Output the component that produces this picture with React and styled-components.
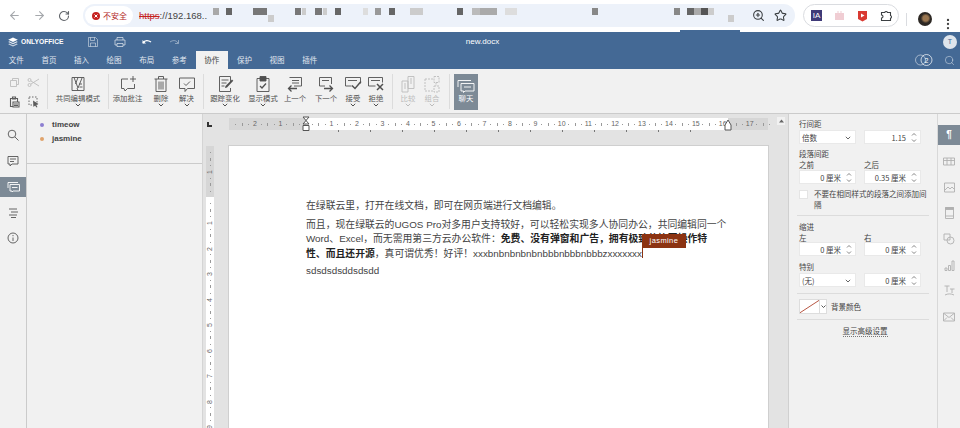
import React from 'react';
import styled, { createGlobalStyle } from 'styled-components';
import { ArrowLeft, ArrowRight, RotateCw, ZoomIn, Star, EllipsisVertical, Search } from 'lucide-react';

const GlobalStyle = createGlobalStyle`
  html, body { margin: 0; padding: 0; background: #fff; }
  body { font-family: "Noto Sans CJK SC", "Liberation Sans", sans-serif; }
  * { box-sizing: border-box; }
`;

const ink = '#505050';
const pale = '#bcbcbc';

// x, width, colour, sits lower
const urlBlocks = [
  [213, 6, '#a9a9a9'], [226, 6, '#666'], [253, 14, '#777'], [268, 6, '#ccc', 1], [295, 6, '#777'],
  [302, 4, '#ccc'], [315, 7, '#777'], [323, 4, '#ccc'], [335, 6, '#666'], [363, 5, '#ddd'],
  [375, 6, '#999'], [389, 6, '#666'], [410, 13, '#ccc'], [457, 6, '#666'], [472, 8, '#bbb'],
  [480, 17, '#aaa'], [505, 12, '#ddd'], [592, 6, '#888'], [674, 6, '#888'], [687, 7, '#666'],
  [694, 7, '#aaa'], [701, 7, '#555'], [708, 6, '#ccc'], [728, 6, '#ccc', 1],
];

const menuTabs = ['文件', '首页', '插入', '绘图', '布局', '参考', '协作', '保护', '视图', '插件'];

const Page = styled.div`
  width: 960px;
  height: 428px;
  overflow: hidden;
  display: flex;
  flex-direction: column;
  color: #444;
`;

/* browser chrome */
const BrowserBar = styled.div`
  height: 32px;
  flex: none;
  display: flex;
  padding: 4px 0 0 7px;
  background: #fff;
  position: relative;
`;
const NavButton = styled.div`
  width: 14px;
  height: 23px;
  margin-right: 11px;
  display: flex;
  align-items: center;
  justify-content: center;
  color: ${p => (p.$off ? '#a5a8ac' : '#5f6368')};
`;
const Omnibox = styled.div`
  width: 712px;
  height: 23px;
  margin-left: 1px;
  border-radius: 12px;
  background: #edf2fa;
  display: flex;
  align-items: center;
  padding: 0 8px 0 2px;
  overflow: hidden;
`;
const Insecure = styled.div`
  width: 48px;
  height: 19px;
  flex: none;
  border-radius: 10px;
  background: #fff;
  display: flex;
  align-items: center;
  gap: 3px;
  padding-left: 7px;
  font-size: 8px;
  color: #b3261e;
`;
const Url = styled.div`
  margin-left: 6px;
  width: 74px;
  flex: none;
  font: 9.5px/12px "Liberation Sans", sans-serif;
  color: #444;
  white-space: nowrap;
  s { color: #c5221f; }
`;
const Blocks = styled.div`
  flex: 1;
  display: flex;
  height: 8px;
  margin-top: -7px;
`;
const Block = styled.span`
  flex: none;
  height: 7px;
  width: ${p => p.$w}px;
  margin-left: ${p => p.$gap}px;
  background: ${p => p.$c};
  transform: translateY(${p => (p.$low ? 7 : 0)}px);
`;
const OmniIcons = styled.div`
  display: flex;
  gap: 9px;
  color: #3c4043;
`;
const ExtPill = styled.div`
  width: 96px;
  height: 23px;
  margin-left: 8px;
  border: 1px solid #dadce0;
  border-radius: 12px;
  display: flex;
  align-items: center;
  justify-content: space-between;
  padding: 0 5px 0 7px;
`;
const ExtBadge = styled.div`
  width: 11px;
  height: 11px;
  background: #3f3a78;
  color: #fff;
  font: 8px/11px "Liberation Sans", sans-serif;
  text-align: center;
`;
const BarDivider = styled.div`
  width: 1px;
  height: 13px;
  margin: 9px 0 0 7px;
  background: #dadce0;
`;
const Profile = styled.div`
  width: 14px;
  height: 14px;
  margin: 8px 0 0 11px;
  border-radius: 50%;
  background: radial-gradient(circle at 55% 45%, #9a7650 0 25%, #2c2723 45%);
`;
const Kebab = styled.div`
  margin: 8px 0 0 9px;
  color: #444;
`;
const Notch = styled.div`
  position: absolute;
  left: 680px;
  bottom: 0;
  width: 60px;
  height: 2px;
  background: #446995;
`;

/* blue app header */
const Header = styled.div`
  height: 37px;
  flex: none;
  background: #446995;
  color: #fff;
`;
const TitleRow = styled.div`
  height: 19px;
  display: grid;
  grid-template-columns: 1fr auto 1fr;
  align-items: center;
  padding: 0 3px 0 8px;
`;
const Brand = styled.div`
  display: flex;
  align-items: center;
  gap: 3px;
  font: bold 6.7px/10px "Liberation Sans", sans-serif;
`;
const QuickTools = styled.div`
  display: flex;
  gap: 15px;
  margin-left: 21px;
`;
const DocName = styled.div`
  font: 8px/10px "Liberation Sans", sans-serif;
`;
const Avatar = styled.div`
  justify-self: end;
  width: 14px;
  height: 14px;
  border-radius: 50%;
  background: #dfe5ec;
  color: #446995;
  font: 7px/14px "Liberation Sans", sans-serif;
  text-align: center;
`;
const TabRow = styled.div`
  height: 18px;
  display: flex;
  align-items: stretch;
`;
const Tab = styled.div`
  width: 32.6px;
  font-size: 7.5px;
  line-height: 17px;
  text-align: center;
  color: ${p => (p.$active ? '#444' : '#e0e7ef')};
  background: ${p => (p.$active ? '#f1f1f1' : 'transparent')};
`;
const TabTools = styled.div`
  margin-left: auto;
  display: flex;
  align-items: center;
  gap: 11px;
  padding-right: 5px;
`;

/* ribbon */
const Ribbon = styled.div`
  height: 45px;
  flex: none;
  background: #f1f1f1;
  border-bottom: 1px solid #cbcbcb;
  display: flex;
  align-items: flex-start;
`;
const ClipGrid = styled.div`
  width: 47px;
  display: grid;
  grid-template-columns: 19px 19px;
  grid-auto-rows: 20px;
  padding: 3px 0 0 5px;
  align-items: center;
  justify-items: center;
`;
const ClipCell = styled.span`
  display: flex;
  color: ${p => (p.$off ? pale : '#5c5c5c')};
`;
const Sep = styled.div`
  width: 1px;
  height: 35px;
  margin-top: 5px;
  background: #dcdcdc;
`;
const Group = styled.div`
  display: flex;
  width: ${p => p.$w}px;
`;
const ToolItem = styled.div`
  width: ${p => p.$w}px;
  height: 40px;
  padding-top: 6px;
  display: flex;
  flex-direction: column;
  align-items: center;
  color: ${p => (p.$off ? pale : ink)};
`;
const ToolLabel = styled.div`
  font-size: 7.4px;
  line-height: 9px;
  white-space: nowrap;
`;
const Chevron = styled.svg`
  width: 6px;
  height: 4px;
  margin-top: 1px;
`;
const ChatButton = styled.div`
  width: 24px;
  height: 36px;
  margin: 5px 0 0 4px;
  background: #7d8a96;
  color: #fff;
  display: flex;
  flex-direction: column;
  align-items: center;
  padding-top: 5px;
`;

/* work area */
const Work = styled.div`
  flex: 1;
  min-height: 0;
  display: flex;
`;
const LeftRail = styled.div`
  width: 27px;
  flex: none;
  background: #f1f1f1;
  border-right: 1px solid #cbcbcb;
  padding-top: 11px;
  display: flex;
  flex-direction: column;
  color: #555;
`;
const RailButton = styled.div`
  height: 20px;
  margin-bottom: ${p => p.$mb ?? 6}px;
  display: flex;
  align-items: center;
  justify-content: center;
  background: ${p => (p.$active ? '#7d8a96' : 'transparent')};
  color: ${p => (p.$active ? '#fff' : '#555')};
`;
const UserPanel = styled.div`
  width: 176px;
  flex: none;
  background: #f1f1f1;
  border-right: 1px solid #d4d4d4;
`;
const UserList = styled.div`
  height: 50px;
  border-bottom: 1px solid #cbcbcb;
  padding: 4px 0 0 13px;
`;
const UserRow = styled.div`
  height: 14px;
  display: flex;
  align-items: center;
  gap: 8px;
  font: bold 8px/14px "Liberation Sans", sans-serif;
  color: #444;
`;
const UserDot = styled.span`
  width: 4px;
  height: 4px;
  border-radius: 50%;
  background: ${p => p.$c};
`;

/* editor */
const Editor = styled.div`
  width: 585px;
  flex: none;
  display: flex;
  background: #e3e3e3;
`;
const EditorMain = styled.div`
  width: 574px;
  display: flex;
  flex-direction: column;
`;
const RulerRow = styled.div`
  height: 32px;
  flex: none;
  display: flex;
  padding-top: 4px;
`;
const TabStop = styled.div`
  width: 26px;
  padding: 4px 0 0 4px;
`;
const StopMark = styled.div`
  width: 5px;
  height: 5px;
  border-left: 2px solid #333;
  border-bottom: 2px solid #333;
`;
const HRuler = styled.div`
  width: 539px;
  height: 12px;
  position: relative;
  display: flex;
  padding-left: 3.7px;
  background: linear-gradient(to right, #d6d6d6 77px, #fff 77px, #fff 499px, #d6d6d6 499px);
`;
const HCell = styled.div`
  flex: 0 0 6.375px;
  height: 12px;
  display: flex;
  align-items: center;
  justify-content: center;
  font: 7px/12px "Liberation Sans", sans-serif;
  color: #666;
`;
const Tick = styled.span`
  flex: none;
  background: #999;
  width: 1px;
  height: ${p => (p.$big ? 3 : 1)}px;
`;
const TabTicks = styled.div`
  position: absolute;
  left: 109px;
  top: 12px;
  display: flex;
  gap: 31px;
`;
const TabTick = styled.span`
  width: 1px;
  height: 2px;
  background: #777;
`;
const IndentMarker = styled.svg`
  position: absolute;
  top: -2px;
  left: ${p => p.$x}px;
  width: 8px;
  height: 16px;
`;
const BodyRow = styled.div`
  flex: 1;
  min-height: 0;
  display: flex;
`;
const VRulerSlot = styled.div`
  width: 26px;
  flex: none;
  padding-left: 3px;
`;
const VRuler = styled.div`
  width: 8px;
  height: 282px;
  display: flex;
  flex-direction: column;
  padding-top: 3.7px;
  background: linear-gradient(to bottom, #d6d6d6 51px, #fff 51px);
`;
const VCell = styled.div`
  flex: 0 0 6.375px;
  display: flex;
  align-items: center;
  justify-content: center;
  font: 7px/6px "Liberation Sans", sans-serif;
  color: #666;
`;
const VNumber = styled.span`
  transform: rotate(-90deg);
`;
const Sheet = styled.div`
  width: 539px;
  height: 300px;
  flex: none;
  background: #fff;
  box-shadow: 0 0 0 1px #cfcfcf;
  padding: 53px 0 0 77px;
  font-size: 9.83px;
  color: #444;
`;
const Para = styled.div`
  margin-bottom: ${p => p.$mb}px;
`;
const DocLine = styled.div`
  height: 14.5px;
  line-height: 14px;
  white-space: nowrap;
  font-family: "Liberation Sans", "Noto Sans CJK SC", sans-serif;
  b { font-weight: 700; color: #222; }
`;
const Cursor = styled.span`
  display: inline-block;
  position: relative;
  width: 0;
  height: 12px;
  vertical-align: middle;
`;
const CaretBar = styled.span`
  position: absolute;
  left: 0;
  bottom: 2px;
  width: 1px;
  height: 24px;
  background: #8c3312;
`;
const NameTag = styled.span`
  position: absolute;
  left: 0;
  bottom: 12px;
  width: 44px;
  height: 14px;
  background: #8c3312;
  color: #fff;
  font: 7.5px/14px "Liberation Sans", sans-serif;
  letter-spacing: 0.4px;
  text-align: center;
`;
const ScrollCol = styled.div`
  width: 11px;
  flex: none;
  padding-top: 3px;
`;
const ScrollUp = styled.div`
  width: 8px;
  height: 8px;
  background: #f1f1f1;
  display: flex;
  align-items: center;
  justify-content: center;
`;

/* paragraph settings */
const Settings = styled.div`
  width: 149px;
  flex: none;
  background: #f1f1f1;
  border-left: 1px solid #d0d0d0;
  padding: 4px 0 0 10px;
  font-size: 7.5px;
  color: #444;
`;
const FieldLabel = styled.div`
  height: ${p => p.$h ?? 12}px;
  line-height: ${p => p.$h ?? 12}px;
  margin-top: ${p => p.$mt ?? 0}px;
`;
const Two = styled.div`
  display: grid;
  grid-template-columns: 57px 57px;
  column-gap: 8px;
`;
const Field = styled.div`
  height: 14px;
  background: #fff;
  display: flex;
  align-items: center;
  justify-content: ${p => (p.$select ? 'space-between' : 'flex-end')};
  padding: ${p => (p.$select ? '0 4px 0 2px' : '0 3px 0 0')};
  gap: 5px;
  border: 1px solid #e9e9e9;
`;
const FieldCaret = styled.span`
  display: flex;
  color: #666;
`;
const Stepper = styled.svg`
  width: 6px;
  height: 11px;
  flex: none;
`;
const CheckRow = styled.div`
  display: flex;
  gap: 6px;
  margin-top: 4px;
`;
const CheckBox = styled.div`
  width: 9px;
  height: 9px;
  margin-top: 2px;
  flex: none;
  background: #fff;
  border: 1px solid #e4e4e4;
`;
const CheckText = styled.div`
  width: 115px;
  line-height: 11px;
`;
const Rule = styled.div`
  width: 132px;
  height: 1px;
  background: #dcdcdc;
  margin: ${p => p.$m};
`;
const ColorRow = styled.div`
  display: flex;
  align-items: center;
  gap: 4px;
  margin-top: 5px;
  height: 15px;
`;
const ColorSwatch = styled.div`
  width: 28px;
  height: 15px;
  background: #fff;
  border: 1px solid #ddd;
  display: flex;
`;
const ColorArrow = styled.div`
  width: 7px;
  margin-left: auto;
  border-left: 1px solid #ddd;
  display: flex;
  align-items: center;
  justify-content: center;
`;
const AdvancedLink = styled.div`
  width: 132px;
  margin-top: 5px;
  text-align: center;
  line-height: 11px;
  span { border-bottom: 1px dotted #777; }
`;
const RightRail = styled.div`
  width: 23px;
  flex: none;
  background: #f1f1f1;
  border-left: 1px solid #d8d8d8;
  padding-top: 11px;
  display: flex;
  flex-direction: column;
`;
const RightTab = styled.div`
  height: ${p => p.$h ?? 26}px;
  margin-bottom: ${p => (p.$active ? 3 : 0)}px;
  display: flex;
  align-items: center;
  justify-content: center;
  background: ${p => (p.$active ? '#7d8a96' : 'transparent')};
  color: ${p => (p.$active ? '#fff' : '#b0b0b0')};
  font: bold 10px/20px "Liberation Sans", sans-serif;
`;

const Svg = ({ w = 18, h = 18, children, sw = 0.9 }) => (
  <svg width={w} height={h} viewBox={`0 0 ${w} ${h}`} fill="none" stroke="currentColor" strokeWidth={sw}>{children}</svg>
);

const ChevronDown = () => (
  <Chevron viewBox="0 0 6 4" fill="none" stroke="currentColor"><path d="M.8.8 3 3l2.2-2.2" /></Chevron>
);

const icons = {
  copy: <Svg w={11} h={11}><path d="M1.5 3.5h6v6h-6zM3.5 3V1.5h6v6H8" /></Svg>,
  cut: <Svg w={13} h={11}><circle cx="2.5" cy="3" r="1.5" /><circle cx="2.5" cy="8" r="1.5" /><path d="M4 4 12 9M4 7l8-5" /></Svg>,
  paste: <Svg w={11} h={12} sw={1.1}><path d="M1.5 2.5h7v8h-7zM3.5 1h3v2h-3z" /><path d="M4 6h6v5H4z" fill="#f1f1f1" /><path d="M5 8h4M5 9.500h4" /></Svg>,
  select: <Svg w={12} h={12}><path d="M1 1h8v8H1z" strokeDasharray="1.5 1.5" /><path d="M5 4.5 10.5 8 8 8.700 9.500 11 8.500 11.500 7 9.500 5.500 11z" fill="currentColor" stroke="none" /></Svg>,
  mode: <Svg><path d="M3 2.500h12v13H3zM5 2.500 9 13M9 2.500 6.500 9M8 13l1 2.500M13 3 9 13" /><path d="M10 9h3M10.500 12h3" /></Svg>,
  addComment: <Svg><path d="M9 4H2.500v9.500H5l1 2.500 2.500-2.500h7V9" /><path d="M14 1v6M11 4h6" /></Svg>,
  trash: <Svg><path d="M2.500 4h13M6.500 4V1.500h5V4M4 4v12.500h10V4M7 6.500v8M9 6.500v8M11 6.500v8" /></Svg>,
  resolve: <Svg><path d="M1.500 3h15v10.500h-7l-2.500 3v-3H1.500z" /><path d="m6 8.500 2 2 4-4" /></Svg>,
  track: <Svg><path d="M14.500 7V1.500h-11v15h11V13" /><path d="M5.500 5h7M5.500 8h5M5.500 11h3" /><path d="m9 13 .5-2L16 4.500l1.300 1.300-6.300 6.700z" fill="currentColor" stroke="none" /></Svg>,
  display: <Svg><path d="M3 3.500h3M12 3.500h3v13H3v-13" /><path d="M6 1.500h6V6H6z" fill="currentColor" /><path d="m6 11 2 2 4-4.500" strokeWidth="1.300" /></Svg>,
  prev: <Svg><path d="M3.500 2.500h12V11H8M6 5.500h7M6 8h7" /><path d="M11 13.500H2.500M5.500 10.500l-3 3 3 3" strokeWidth="1.300" /></Svg>,
  next: <Svg><path d="M14.500 9V2.500h-12V11H8M5 5.500h7" /><path d="M7 13.500h8.500M12.500 10.500l3 3-3 3" strokeWidth="1.300" /></Svg>,
  accept: <Svg><path d="M1.500 2.500h15v6M1.500 2.500V11h6M4 5.500h9" /><path d="m8 10.500 3 3 6-7" strokeWidth="1.500" /></Svg>,
  reject: <Svg><path d="M1.500 2.500h14v5M1.500 2.500V11h7M4 5.500h9" /><path d="m10 9 6 6M16 9l-6 6" strokeWidth="1.500" /></Svg>,
  compare: <Svg><path d="M9 1.500h6v12H9zM3 6h6v11H3zM5 9h2M5 11h2M5 13h2M11 4h2M11 6h2M11 8h2" /></Svg>,
  combine: <Svg><path d="M2 4h6M2 4v12h6M11 1.500h5v6h-5zM11 11h5v6h-5zM8 4l3 0M8 16h3M13 7.500V11" strokeDasharray="2 1" /></Svg>,
  chat: <Svg w={18} h={14}><path d="M1 8V1.500h13" /><path d="M4 4.500h13V12H8l-1.500 1.500V12H4zM7 8h7" /></Svg>,
};

const Logo = () => (
  <svg width="10" height="10" viewBox="0 0 10 10" fill="#fff">
    <path d="M5 .5 9.800 2.700 5 5 .2 2.700z" />
    <path d="M1.300 4.300 5 6 8.700 4.300 9.800 5 5 7.300.2 5z" opacity=".85" />
    <path d="M1.300 6.500 5 8.200l3.700-1.700L9.800 7.200 5 9.500.2 7.200z" opacity=".7" />
  </svg>
);

const ToolButton = ({ w, icon, off, caret, children }) => (
  <ToolItem $w={w} $off={off}>
    {icons[icon]}
    <ToolLabel>{children}</ToolLabel>
    {caret && <ChevronDown />}
  </ToolItem>
);

const Spin = () => (
  <Stepper viewBox="0 0 6 11" fill="none" stroke="#666" strokeWidth=".8">
    <path d="M1 3.500 3 1.500l2 2M1 7.500l2 2 2-2" />
  </Stepper>
);

const Select = ({ children }) => (
  <Field $select>{children}<FieldCaret><ChevronDown /></FieldCaret></Field>
);

const Spinner = ({ children }) => <Field>{children}<Spin /></Field>;

const rulerCell = i => {
  if (i % 4 === 0) return i === 0 ? null : Math.abs(i / 4);
  return i % 2 === 0 ? <Tick $big /> : <Tick />;
};

const hCells = Array.from({ length: 83 }, (_, n) => n - 11);
const vCells = Array.from({ length: 44 }, (_, n) => n - 7);
const tabTicks = Array.from({ length: 12 }, (_, n) => n);

const DocEditor = () => (
  <Editor>
    <EditorMain>
      <RulerRow>
        <TabStop><StopMark /></TabStop>
        <HRuler>
          {hCells.map(i => <HCell key={i}>{rulerCell(i)}</HCell>)}
          <TabTicks>{tabTicks.map(n => <TabTick key={n} />)}</TabTicks>
          <IndentMarker $x={73} viewBox="0 0 8 16" fill="#fff" stroke="#555">
            <path d="M1 1h6L1 8h6L1 1M1 9.500h6v5H1z" />
          </IndentMarker>
          <IndentMarker $x={495} viewBox="0 0 8 16" fill="#fff" stroke="#555">
            <path d="M4 4 7 9v5H1V9z" />
          </IndentMarker>
        </HRuler>
      </RulerRow>
      <BodyRow>
        <VRulerSlot>
          <VRuler>
            {vCells.map(i => {
              const c = rulerCell(i);
              return <VCell key={i}>{typeof c === 'number' ? <VNumber>{c}</VNumber> : c}</VCell>;
            })}
          </VRuler>
        </VRulerSlot>
        <Sheet>
          <Para $mb={4}>
            <DocLine>在绿联云里，打开在线文档，即可在网页端进行文档编辑。</DocLine>
          </Para>
          <Para $mb={3}>
            <DocLine>而且，现在绿联云的UGOS Pro对多用户支持较好，可以轻松实现多人协同办公，共同编辑同一个</DocLine>
            <DocLine>Word、Excel，而无需用第三方云办公软件：<b>免费、没有弹窗和广告，拥有极致的协同操作特</b></DocLine>
            <DocLine>
              <b>性、而且还开源</b>，真可谓优秀！好评！xxxbnbnbnbnbnbbbnbbbnbbbzxxxxxxx
              <Cursor><CaretBar /><NameTag>jasmine</NameTag></Cursor>
            </DocLine>
          </Para>
          <DocLine>sdsdsdsddsdsdd</DocLine>
        </Sheet>
      </BodyRow>
    </EditorMain>
    <ScrollCol>
      <ScrollUp>
        <svg width="5" height="4" viewBox="0 0 5 4" fill="#666"><path d="M2.500.5 5 3.500H0z" /></svg>
      </ScrollUp>
    </ScrollCol>
  </Editor>
);

const SettingsPanel = () => (
  <Settings>
    <FieldLabel>行间距</FieldLabel>
    <Two>
      <Select>倍数</Select>
      <Spinner>1.15</Spinner>
    </Two>
    <FieldLabel $mt={4}>段落间距</FieldLabel>
    <Two>
      <FieldLabel $h={10}>之前</FieldLabel>
      <FieldLabel $h={10}>之后</FieldLabel>
      <Spinner>0 厘米</Spinner>
      <Spinner>0.35 厘米</Spinner>
    </Two>
    <CheckRow>
      <CheckBox />
      <CheckText>不要在相同样式的段落之间添加间隔</CheckText>
    </CheckRow>
    <Rule $m="5px 0 5px -2px" />
    <FieldLabel>缩进</FieldLabel>
    <Two>
      <FieldLabel $h={9}>左</FieldLabel>
      <FieldLabel $h={9}>右</FieldLabel>
      <Spinner>0 厘米</Spinner>
      <Spinner>0 厘米</Spinner>
    </Two>
    <FieldLabel $mt={5}>特别</FieldLabel>
    <Two>
      <Select>(无)</Select>
      <Spinner>0 厘米</Spinner>
    </Two>
    <Rule $m="6px 0 0 -2px" />
    <ColorRow>
      <ColorSwatch>
        <svg width="20" height="13" viewBox="0 0 20 13"><path d="M0 13 20 0" stroke="#b5503c" /></svg>
        <ColorArrow>
          <svg width="5" height="3" viewBox="0 0 5 3" fill="none" stroke="#555"><path d="M.5.5 2.500 2.500 4.500.5" /></svg>
        </ColorArrow>
      </ColorSwatch>
      背景颜色
    </ColorRow>
    <Rule $m="5px 0 0 -2px" />
    <AdvancedLink><span>显示高级设置</span></AdvancedLink>
  </Settings>
);

const App = () => (
  <Page>
    <GlobalStyle />
    <BrowserBar>
      <NavButton $off><ArrowLeft size={13} /></NavButton>
      <NavButton $off><ArrowRight size={13} /></NavButton>
      <NavButton><RotateCw size={12} strokeWidth={2.2} /></NavButton>
      <Omnibox>
        <Insecure>
          <svg width="8" height="8" viewBox="0 0 8 8">
            <circle cx="4" cy="4" r="4" fill="#c5221f" />
            <path d="m2.500 2.500 3 3m0-3-3 3" stroke="#fff" />
          </svg>
          不安全
        </Insecure>
        <Url><s>https</s>://192.168..</Url>
        <Blocks>
          {urlBlocks.map(([x, w, c, low], n) => {
            const prev = n ? urlBlocks[n - 1][0] + urlBlocks[n - 1][1] : 213;
            return <Block key={x} $w={w} $c={c} $low={low} $gap={x - prev} />;
          })}
        </Blocks>
        <OmniIcons>
          <ZoomIn size={13} />
          <Star size={13} />
        </OmniIcons>
      </Omnibox>
      <ExtPill>
        <ExtBadge>IA</ExtBadge>
        <svg width="11" height="11" viewBox="0 0 11 11" fill="#f0cdd3"><path d="M1 3h9v7H1zM3.500 1h1v2h-1zM6.500 1h1v2h-1z" /></svg>
        <svg width="11" height="12" viewBox="0 0 11 12"><path d="M1 1h9v8l-4.500 2.500L1 9z" fill="#d93a32" /><path d="M4 3.500 7.500 5.500 4 7.500z" fill="#fff" /></svg>
        <svg width="13" height="13" viewBox="0 0 13 13" fill="none" stroke="#3c4043" strokeWidth="1.100">
          <path d="M1.500 3.500h3.200a1.500 1.500 0 0 1 2.800 0h3v3a1.500 1.500 0 0 1 0 2.800v2.200h-9V9a1.500 1.500 0 0 0 0-3z" />
        </svg>
      </ExtPill>
      <BarDivider />
      <Profile />
      <Kebab><EllipsisVertical size={14} /></Kebab>
      <Notch />
    </BrowserBar>

    <Header>
      <TitleRow>
        <Brand>
          <Logo />
          ONLYOFFICE
          <QuickTools>
            <Svg w={12} h={12} sw={0.8}><path d="M1.500 1.500h7l2 2v7h-9zM3.500 1.500v3h4v-3M3.500 10.500V7h5v3.500" opacity=".6" /></Svg>
            <Svg w={12} h={12} sw={0.8}><path d="M3 4V1.500h6V4M1 4h10v5H9M3 9H1V4M3 7.500h6v3H3z" opacity=".75" /></Svg>
            <Svg w={12} h={12} sw={1.4}><path d="M2 7c2-3 5-3 8-1" /><path d="M1.500 4v3.500H5" fill="currentColor" stroke="none" /></Svg>
            <Svg w={12} h={12} sw={1}><path d="M10 7C8 4 5 4 2 6M10.500 4v3.500H7" opacity=".4" /></Svg>
          </QuickTools>
        </Brand>
        <DocName>new.docx</DocName>
        <Avatar>T</Avatar>
      </TitleRow>
      <TabRow>
        {menuTabs.map(t => <Tab key={t} $active={t === '协作'}>{t}</Tab>)}
        <TabTools>
          <Svg w={19} h={14} sw={0.7}>
            <circle cx="6.500" cy="7" r="5" opacity=".7" />
            <circle cx="12.500" cy="7" r="5.500" />
            <text x="12.500" y="9.500" fill="#fff" stroke="none" fontSize="7" textAnchor="middle" fontFamily="Liberation Sans">2</text>
          </Svg>
          <Search size={11} strokeWidth={1.1} color="#e0e7ef" />
        </TabTools>
      </TabRow>
    </Header>

    <Ribbon>
      <ClipGrid>
        <ClipCell $off>{icons.copy}</ClipCell>
        <ClipCell $off>{icons.cut}</ClipCell>
        <ClipCell>{icons.paste}</ClipCell>
        <ClipCell>{icons.select}</ClipCell>
      </ClipGrid>
      <Sep />
      <Group $w={60}>
        <ToolButton w={60} icon="mode" caret>共同编辑模式</ToolButton>
      </Group>
      <Sep />
      <Group $w={94}>
        <ToolButton w={37} icon="addComment">添加批注</ToolButton>
        <ToolButton w={30} icon="trash" caret>删除</ToolButton>
        <ToolButton w={21} icon="resolve" caret>解决</ToolButton>
      </Group>
      <Sep />
      <Group $w={188}>
        <ToolButton w={42} icon="track" caret>跟踪变化</ToolButton>
        <ToolButton w={34} icon="display" caret>显示模式</ToolButton>
        <ToolButton w={30} icon="prev">上一个</ToolButton>
        <ToolButton w={32} icon="next">下一个</ToolButton>
        <ToolButton w={22} icon="accept" caret>接受</ToolButton>
        <ToolButton w={24} icon="reject" caret>拒绝</ToolButton>
      </Group>
      <Sep />
      <Group $w={56}>
        <ToolButton w={30} icon="compare" off caret>比较</ToolButton>
        <ToolButton w={18} icon="combine" off caret>组合</ToolButton>
      </Group>
      <Sep />
      <ChatButton>
        {icons.chat}
        <ToolLabel>聊天</ToolLabel>
      </ChatButton>
    </Ribbon>

    <Work>
      <LeftRail>
        <RailButton>
          <Svg w={12} h={12}><circle cx="5" cy="5" r="3.800" /><path d="m8 8 3.500 3.500" /></Svg>
        </RailButton>
        <RailButton>
          <Svg w={12} h={12}><path d="M1 1.500h10v7.500H5l-2 2V9H1zM3 4h6M3 6.500h4" /></Svg>
        </RailButton>
        <RailButton $active $mb={5}>
          <Svg w={13} h={12}><path d="M1 7V1.500h10" /><path d="M3 3.500h9.500V10H6l-1 1v-1H3zM5 6.500h5.500" /></Svg>
        </RailButton>
        <RailButton>
          <Svg w={11} h={11}><path d="M1 2h8M3 5h7M1 8h8M3 10.500h5" /></Svg>
        </RailButton>
        <RailButton>
          <Svg w={12} h={12}><circle cx="6" cy="6" r="5" /><path d="M6 5.500v3.500M6 3v1.200" /></Svg>
        </RailButton>
      </LeftRail>
      <UserPanel>
        <UserList>
          <UserRow><UserDot $c="#8d7fd1" />timeow</UserRow>
          <UserRow><UserDot $c="#e0a36c" />jasmine</UserRow>
        </UserList>
      </UserPanel>
      <DocEditor />
      <SettingsPanel />
      <RightRail>
        <RightTab $active $h={20}>¶</RightTab>
        <RightTab>
          <Svg w={12} h={9}><path d="M.5 1h11v7H.5zM.5 3.500h11M4 1v7M8 1v7" /></Svg>
        </RightTab>
        <RightTab>
          <Svg w={11} h={11}><path d="M.5 1h10v9H.5zM1 8l3-3 2 2 2-2 2 2" /></Svg>
        </RightTab>
        <RightTab>
          <Svg w={9} h={12}><path d="M.5.500h8v11h-8zM.5 9h8" /><path d="M.5.500h8V2.500h-8z" fill="currentColor" /></Svg>
        </RightTab>
        <RightTab>
          <Svg w={12} h={12}><path d="M1 1h6v6H1z" /><circle cx="7.500" cy="7.500" r="3.500" /></Svg>
        </RightTab>
        <RightTab>
          <Svg w={11} h={11}><path d="M1 10.500V8h2v2.500zM4.500 10.500V5.500h2v5zM8 10.500V1h2v9.500z" /></Svg>
        </RightTab>
        <RightTab>
          <Svg w={11} h={12}><path d="M.5 1h5M3 1v6M6 4h4.500M8 4v4M1 10c3-1.500 6-1.500 9 0" /></Svg>
        </RightTab>
        <RightTab>
          <Svg w={12} h={10}><path d="M.5 1h11v8H.5zM1 1.500l5 4 5-4M1 8.500l3-3M11 8.500l-3-3" /></Svg>
        </RightTab>
      </RightRail>
    </Work>
  </Page>
);

export default App;
